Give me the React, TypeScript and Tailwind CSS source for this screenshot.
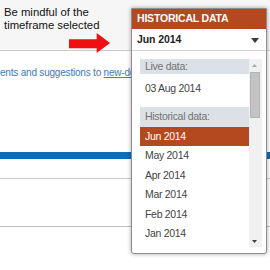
export default function App() {
  const months = ["Jun 2014", "May 2014", "Apr 2014", "Mar 2014", "Feb 2014", "Jan 2014"];

  return (
    <div className="relative h-[270px] w-[270px] overflow-hidden bg-white font-['Liberation_Sans',Arial,sans-serif]">
      {/* page behind the menu */}
      <div className="h-[51px] border-b border-[#cfcfcf] bg-[#f6f6f6] px-[4px] pt-[6px] text-[11.3px] leading-[13px] text-[#111]">
        <p>Be mindful of the</p>
        <p>timeframe selected</p>
      </div>
      <div className="whitespace-nowrap pt-[15px] text-[10px] leading-[14px] tracking-[-0.2px] text-[#3b7bc0]">
        ents and suggestions to <span className="underline">new-design</span>
      </div>
      <div className="mt-[72px] h-[7px] bg-[#0b6dbd]" />
      <div className="mt-[19px] h-px bg-[#cccccc]" />
      <div className="mt-[47px] h-px bg-[#bdbdbd]" />

      {/* annotation arrow */}
      <svg className="absolute left-[69px] top-[33px]" width="41" height="20" viewBox="0 0 41 20">
        <polygon points="0,6.3 27.7,6.3 27.7,0 41,10 27.7,20 27.7,15.3 0,15.3" fill="#f01010" />
      </svg>

      {/* historical data menu */}
      <div className="absolute left-[131px] top-[8px] flex h-[246px] w-[136px] flex-col rounded-b-[3px] border border-[#8d8d8d] bg-white shadow-[0_0_4px_rgba(0,0,0,0.35)]">
        <div className="flex h-[20px] items-center bg-[#b4491f] pl-[5px] text-[10.5px] font-bold tracking-[-0.2px] text-white">
          HISTORICAL DATA
        </div>
        <div className="flex h-[22px] items-center justify-between border-b border-[#d4d4d4] pl-[5px] pr-[7px] pt-px text-[10.5px] font-bold tracking-[-0.1px] text-[#222]">
          <span>Jun 2014</span>
          <svg width="8" height="5" viewBox="0 0 8 5">
            <polygon points="0,0 8,0 4,5" fill="#3a3a3a" />
          </svg>
        </div>
        <div className="ml-[8px] mr-[4px] mt-[8px] flex h-[188px] overflow-hidden">
          <div className="flex-1 overflow-hidden text-[10.5px] leading-[13px] tracking-[-0.3px]">
            <div className="flex h-[15px] items-center bg-[#dce1e7] pl-[5px] text-[#727272]">Live data:</div>
            <div className="h-[33px] pl-[5px] pt-[5px] leading-[19px] text-[#444]">03 Aug 2014</div>
            <div className="flex h-[19.5px] items-center bg-[#dce1e7] pl-[5px] text-[#727272]">Historical data:</div>
            {months.map((m, i) => (
              <div
                key={m}
                className={
                  i === 0
                    ? "flex h-[19.5px] items-center bg-[#b4491f] pl-[5px] text-white"
                    : "flex h-[19.5px] items-center pl-[5px] text-[#444]"
                }
              >
                {m}
              </div>
            ))}
          </div>
          <div className="flex w-[13px] flex-col items-start bg-[#f1f1f1]">
            <div className="flex h-[13px] w-[11px] items-center justify-center">
              <svg width="5" height="3" viewBox="0 0 5 3">
                <polygon points="0,3 5,3 2.5,0" fill="#a8a8a8" />
              </svg>
            </div>
            <div className="ml-px h-[46px] w-[10px] border border-[#b3b3b3] bg-[#c3c3c3]" />
            <div className="flex-1" />
            <div className="mb-[4px] flex h-[3px] w-[11px] items-center justify-center">
              <svg width="5" height="3" viewBox="0 0 5 3">
                <polygon points="0,0 5,0 2.5,3" fill="#3c3c3c" />
              </svg>
            </div>
          </div>
        </div>
      </div>
    </div>
  );
}
